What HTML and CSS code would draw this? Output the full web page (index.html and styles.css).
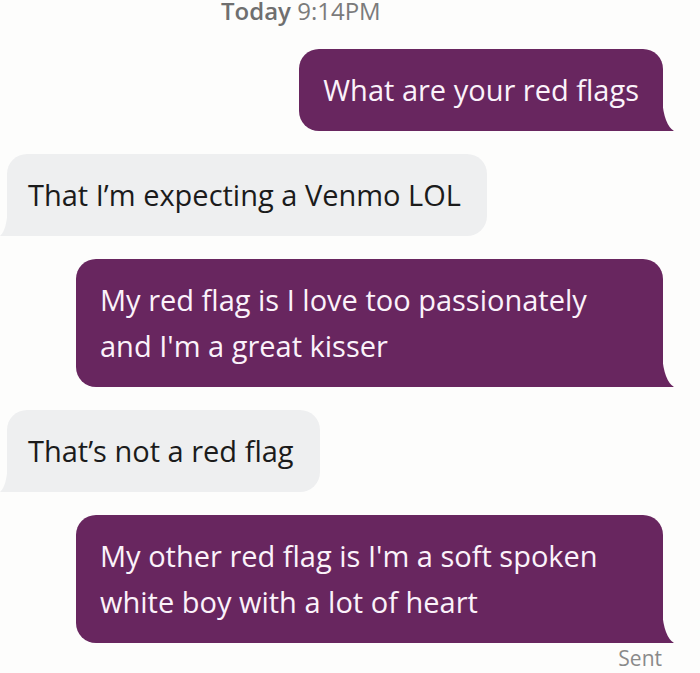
FILE: index.html
```html
<!DOCTYPE html>
<html lang="en">

<head>
  <meta charset="UTF-8">
  <title>Chat</title>
  <link rel="stylesheet" href="styles.css">
</head>

<body>
  <div class="fecha"><b>Today</b> 9:14PM</div>
  <div class="chat">
    <div class="fila derecha">
      <div class="burbuja mia">What are your red flags</div>
    </div>
    <div class="fila">
      <div class="burbuja suya">That I’m expecting a Venmo LOL</div>
    </div>
    <div class="fila derecha">
      <div class="burbuja mia">My red flag is I love too passionately and I'm a great kisser</div>
    </div>
    <div class="fila">
      <div class="burbuja suya">That’s not a red flag</div>
    </div>
    <div class="fila derecha">
      <div class="burbuja mia">My other red flag is I'm a soft spoken white boy with a lot of heart</div>
    </div>
  </div>
  <div class="estado">Sent</div>
</body>

</html>
```
FILE: styles.css
```css
body {
  margin: 0;
  background-color: #fdfdfc;
  font-family: "Open Sans", "Liberation Sans", sans-serif;
  overflow: hidden;
}

.fecha {
  height: 22px;
  padding-left: 221px;
  font-size: 24px;
  line-height: 22px;
  color: #7b7b7b;
}

.fecha b {
  font-weight: 600;
  color: #6f6f6f;
}

.chat {
  display: flex;
  flex-direction: column;
  gap: 23px;
  padding-top: 27px;
}

.fila {
  display: flex;
}

.derecha {
  justify-content: flex-end;
  padding-right: 37px;
}

.burbuja {
  position: relative;
  max-width: 587px;
  box-sizing: border-box;
  padding: 18px 24px;
  font-size: 29px;
  line-height: 46px;
  border-radius: 20px;
}

.mia {
  background-color: #68265f;
  color: #fbf2fa;
  border-bottom-right-radius: 0;
}

.mia::after {
  content: '';
  position: absolute;
  right: -11px;
  bottom: 0;
  width: 12px;
  height: 32px;
  background-color: #68265f;
  clip-path: path('M0 0 Q 2 26 12 32 L 0 32 Z');
}

.suya {
  margin-left: 7px;
  padding-left: 21px;
  padding-right: 26px;
  background-color: #eeeff0;
  color: #1b1b1b;
  border-bottom-left-radius: 0;
}

.suya::after {
  content: '';
  position: absolute;
  left: -7px;
  bottom: 0;
  width: 8px;
  height: 30px;
  background-color: #eeeff0;
  clip-path: path('M8 0 Q 7 24 0 30 L 8 30 Z');
}

.estado {
  padding: 1px 38px 0 0;
  text-align: right;
  font-size: 21px;
  color: #8a8a8a;
}
```
